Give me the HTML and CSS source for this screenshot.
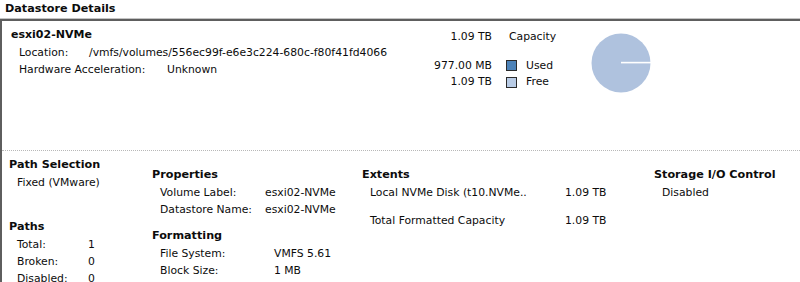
FILE: index.html
```html
<!DOCTYPE html>
<html>
<head>
<meta charset="utf-8">
<link rel="stylesheet" href="styles.css">
</head>
<body>
<div class="header">Datastore Details</div>
<div class="panel">
  <div class="top">
    <div class="info">
      <div class="name">esxi02-NVMe</div>
      <div class="row"><span class="lbl lbl-loc">Location:</span><span>/vmfs/volumes/556ec99f-e6e3c224-680c-f80f41fd4066</span></div>
      <div class="row"><span class="lbl lbl-hw">Hardware Acceleration:</span><span>Unknown</span></div>
    </div>
    <div class="stats">
      <div class="val">1.09 TB</div><div class="key key-cap">Capacity</div>
      <div class="spacer"></div><div class="spacer"></div>
      <div class="val">977.00 MB</div><div class="key"><span class="sw sw-used"></span>Used</div>
      <div class="val">1.09 TB</div><div class="key"><span class="sw sw-free"></span>Free</div>
    </div>
    <svg class="pie" width="60" height="60" viewBox="0 0 60 60">
      <circle cx="30" cy="30" r="29.5" fill="#afc2de"/>
      <line x1="30" y1="29.6" x2="60" y2="29.6" stroke="#ffffff" stroke-width="1.6"/>
    </svg>
  </div>
  <div class="bottom">
    <div class="col">
      <div class="h">Path Selection</div>
      <div class="row ind">Fixed (VMware)</div>
      <div class="h h-paths">Paths</div>
      <div class="row ind"><span class="lbl lbl-path">Total:</span><span>1</span></div>
      <div class="row ind"><span class="lbl lbl-path">Broken:</span><span>0</span></div>
      <div class="row ind"><span class="lbl lbl-path">Disabled:</span><span>0</span></div>
    </div>
    <div class="col col-off">
      <div class="h">Properties</div>
      <div class="row ind"><span class="lbl lbl-prop">Volume Label:</span><span>esxi02-NVMe</span></div>
      <div class="row ind"><span class="lbl lbl-prop">Datastore Name:</span><span>esxi02-NVMe</span></div>
      <div class="h h-fmt">Formatting</div>
      <div class="row ind"><span class="lbl lbl-fmt">File System:</span><span>VMFS 5.61</span></div>
      <div class="row ind"><span class="lbl lbl-fmt">Block Size:</span><span>1 MB</span></div>
    </div>
    <div class="col col-off">
      <div class="h">Extents</div>
      <div class="row ind"><span class="lbl lbl-ext">Local NVMe Disk (t10.NVMe..</span><span>1.09 TB</span></div>
      <div class="row ind row-gap"><span class="lbl lbl-ext">Total Formatted Capacity</span><span>1.09 TB</span></div>
    </div>
    <div class="col col-off">
      <div class="h">Storage I/O Control</div>
      <div class="row ind">Disabled</div>
    </div>
  </div>
</div>
</body>
</html>
```

FILE: styles.css
```css
html, body {
  margin: 0;
  padding: 0;
  background: #ffffff;
}
body {
  font-family: "DejaVu Sans", sans-serif;
  font-size: 10.8px;
  color: #0c0c0c;
  width: 800px;
  height: 282px;
  overflow: hidden;
}
.header {
  height: 18px;
  line-height: 17px;
  padding-left: 5px;
  font-weight: bold;
  font-size: 11.2px;
  border-bottom: 1px solid #c4c4c4;
}
.panel {
  border-top: 2px solid #5e5e5e;
  border-left: 2px solid #5e5e5e;
}
.top {
  display: flex;
  height: 124px;
  padding: 5px 0 0 9px;
  border-bottom: 1px dotted #b8b8b8;
}
.info {
  width: 401px;
  flex: 0 0 401px;
}
.name {
  font-weight: bold;
  line-height: 18px;
  font-size: 11px;
}
.row {
  line-height: 17px;
  white-space: nowrap;
}
.info .row {
  padding-left: 8px;
}
.lbl {
  display: inline-block;
}
.lbl-loc { width: 70px; }
.lbl-hw { width: 148px; }
.stats {
  margin-top: 3px;
  display: grid;
  grid-template-columns: 80px 99px;
  grid-template-rows: 16.5px 12px 16.5px 16.5px;
  line-height: 16.5px;
  align-content: start;
}
.val {
  text-align: right;
}
.key {
  display: flex;
  align-items: center;
}
.key-cap {
  padding-left: 17px;
}
.sw {
  width: 9px;
  height: 9px;
  border: 1px solid #2b2b2b;
  margin-left: 14px;
  margin-right: 9px;
}
.sw-used { background: #4c82b8; }
.sw-free { background: #b9cce6; }
.pie {
  display: block;
  margin-top: 7px;
  flex: 0 0 60px;
}
.bottom {
  display: grid;
  grid-template-columns: 143px 210px 292px 1fr;
  padding: 4px 0 0 7px;
}
.h {
  font-weight: bold;
  line-height: 19px;
  font-size: 11.2px;
}
.col-off {
  padding-top: 10px;
}
.h-paths {
  margin-top: 26px;
}
.h-fmt {
  margin-top: 8px;
}
.ind {
  padding-left: 8px;
}
.lbl-path { width: 71px; }
.lbl-prop { width: 105px; }
.lbl-fmt { width: 114px; }
.lbl-ext { width: 195px; }
.row-gap {
  margin-top: 11px;
}
```
